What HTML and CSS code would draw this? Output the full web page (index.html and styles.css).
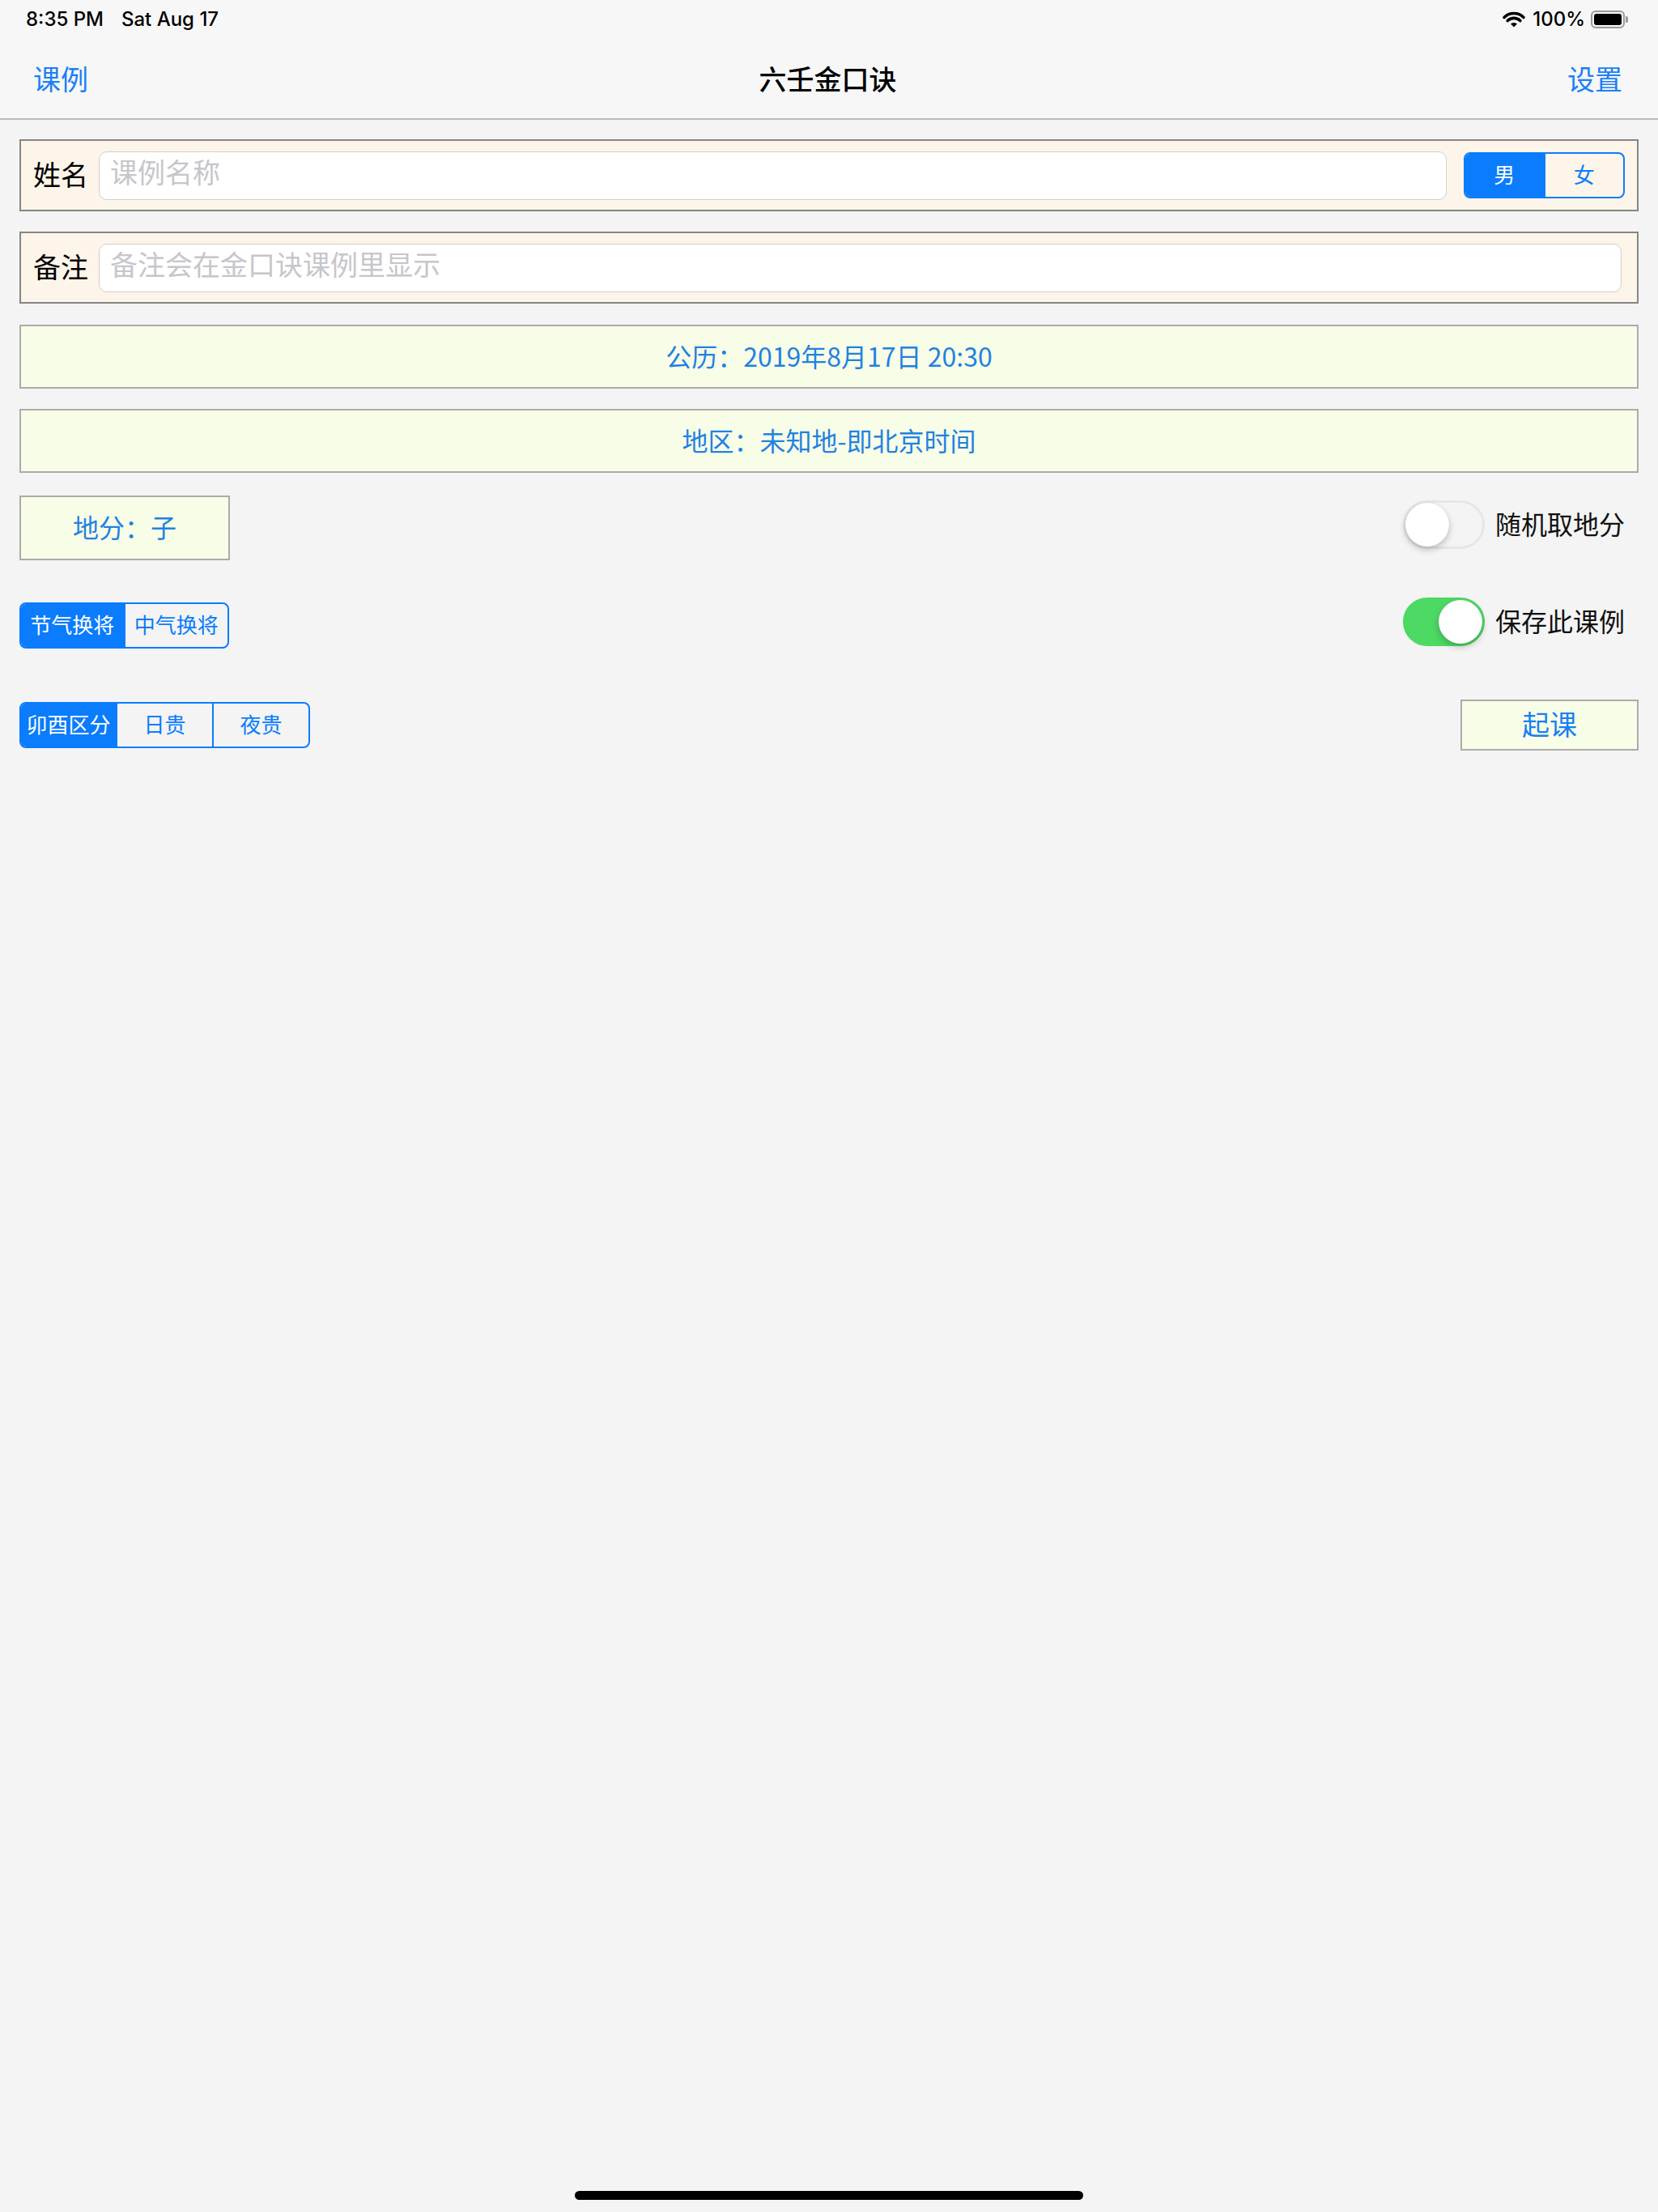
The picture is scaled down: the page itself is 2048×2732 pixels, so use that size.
FILE: index.html
```html
<!DOCTYPE html>
<html>
	<head>
		<meta charset="UTF-8">
		<title>六壬金口诀</title>
		<link rel="stylesheet" href="styles.css">
	</head>
	<body>
		<div class="page">
			<div class="topbar">
				<div class="statusbar">
					<div class="sb-left">
						<span>8:35 PM</span>
						<span>Sat Aug 17</span>
					</div>
					<div class="sb-right">
						<svg class="wifi" width="30" height="22" viewBox="0 0 30 22">
							<path d="M3 8.5 A17 17 0 0 1 27 8.5" fill="none" stroke="#000" stroke-width="3.6" stroke-linecap="round"/>
							<path d="M7.2 12.6 A11 11 0 0 1 22.8 12.6" fill="none" stroke="#000" stroke-width="3.6" stroke-linecap="round"/>
							<path d="M15 20.5 L11 16.6 A5.6 5.6 0 0 1 19 16.6 Z" fill="#000"/>
						</svg>
						<span>100%</span>
						<span class="battery"><span class="battery-level"></span></span>
						<span class="battery-nub"></span>
					</div>
				</div>
				<div class="navbar">
					<a class="nav-btn" href="javascript:;">课例</a>
					<div class="nav-title">六壬金口诀</div>
					<a class="nav-btn nav-right" href="javascript:;">设置</a>
				</div>
			</div>

			<div class="form">
				<div class="field-row">
					<span class="field-label">姓名</span>
					<div class="field-input">课例名称</div>
					<div class="seg seg-gender">
						<span class="seg-item on">男</span>
						<span class="seg-item">女</span>
					</div>
				</div>
				<div class="field-row field-row-wide">
					<span class="field-label">备注</span>
					<div class="field-input">备注会在金口诀课例里显示</div>
				</div>
				<div class="info-box">公历：2019年8月17日 20:30</div>
				<div class="info-box">地区：未知地-即北京时间</div>

				<div class="option-row row-difen">
					<div class="pick-box">地分：子</div>
					<div class="switch-group">
						<span class="switch"><span class="knob"></span></span>
						<span class="switch-label">随机取地分</span>
					</div>
				</div>

				<div class="option-row row-jiang">
					<div class="seg seg-jiang">
						<span class="seg-item on">节气换将</span>
						<span class="seg-item">中气换将</span>
					</div>
					<div class="switch-group">
						<span class="switch on"><span class="knob"></span></span>
						<span class="switch-label">保存此课例</span>
					</div>
				</div>

				<div class="option-row row-gui">
					<div class="seg seg-gui">
						<span class="seg-item on">卯酉区分</span>
						<span class="seg-item">日贵</span>
						<span class="seg-item">夜贵</span>
					</div>
					<a class="start-btn" href="javascript:;">起课</a>
				</div>
			</div>

			<div class="home-bar"></div>
		</div>
	</body>
</html>
```

FILE: styles.css
```css
* {
	margin: 0;
	padding: 0;
	box-sizing: border-box;
}
html, body {
	background: #f4f4f4;
}
body {
	font-family: "Noto Sans CJK SC", "Noto Sans", sans-serif;
	color: #000;
}
a {
	text-decoration: none;
}
.page {
	position: relative;
	min-height: 100vh;
}

/* top: status bar + navigation */
.topbar {
	background: #f7f7f7;
	border-bottom: 2px solid #bcbcbc;
}
.statusbar {
	height: 47px;
	padding: 0 37px 0 32px;
	display: flex;
	justify-content: space-between;
	align-items: center;
	font-family: Inter, "Noto Sans", sans-serif;
	font-size: 24px;
	font-weight: 500;
	line-height: 1;
}
.sb-left {
	display: flex;
	gap: 22px;
}
.sb-right {
	display: flex;
	align-items: center;
}
.wifi {
	margin-right: 8px;
}
.battery {
	width: 42px;
	height: 22px;
	margin-left: 7px;
	border: 2px solid #9a9a9a;
	border-radius: 6px;
	padding: 2px;
	display: flex;
}
.battery-level {
	flex: 1;
	background: #000;
	border-radius: 3px;
}
.battery-nub {
	width: 3px;
	height: 8px;
	background: #9a9a9a;
	border-radius: 0 2px 2px 0;
	margin-left: 1px;
}
.navbar {
	height: 99px;
	padding: 0 44px 0 41px;
	display: grid;
	grid-template-columns: 1fr auto 1fr;
	align-items: center;
}
.nav-btn {
	font-size: 34px;
	line-height: 1;
	color: #1a7ff8;
}
.nav-right {
	justify-self: end;
}
.nav-title {
	font-size: 34px;
	font-weight: 500;
	line-height: 1;
}

/* form */
.form {
	padding: 24px 24px 0;
	display: flex;
	flex-direction: column;
}
.field-row {
	height: 89px;
	border: 2px solid #858585;
	background: #fdf5e9;
	display: flex;
	align-items: center;
	padding: 0 15px;
	margin-bottom: 25px;
}
.field-row-wide {
	padding-right: 19px;
	margin-bottom: 26px;
}
.field-label {
	font-size: 34px;
	line-height: 1;
	width: 68px;
	margin-right: 13px;
	padding-bottom: 4px;
}
.field-input {
	flex: 1;
	height: 60px;
	background: #fff;
	border: 1px solid #d3cec7;
	border-radius: 10px;
	padding: 0 0 10px 13px;
	display: flex;
	align-items: center;
	font-size: 34px;
	line-height: 1;
	color: #c6c6cb;
}
.info-box {
	height: 79px;
	border: 2px solid #ababab;
	background: #f8fde7;
	display: flex;
	align-items: center;
	justify-content: center;
	font-size: 32px;
	line-height: 1;
	padding-bottom: 4px;
	color: #1f82e2;
	margin-bottom: 25px;
}

/* segmented controls */
.seg {
	display: flex;
	height: 57px;
	border: 2px solid #0a7cfd;
	border-radius: 8px;
	overflow: hidden;
}
.seg-item {
	flex: 1;
	display: flex;
	align-items: center;
	justify-content: center;
	font-size: 26px;
	line-height: 1;
	padding-bottom: 3px;
	color: #0a7cfd;
	border-left: 2px solid #0a7cfd;
}
.seg-item:first-child {
	border-left: none;
}
.seg-item.on {
	background: #0a7cfd;
	color: #fff;
}
.seg-gender {
	width: 199px;
	margin-left: 21px;
}
.seg-jiang {
	width: 259px;
}
.seg-gui {
	width: 359px;
}

/* option rows */
.option-row {
	display: flex;
	justify-content: space-between;
	align-items: center;
}
.row-difen {
	margin-top: 3px;
	height: 80px;
}
.row-jiang {
	margin-top: 45px;
	height: 64px;
	align-items: flex-start;
}
.row-jiang .seg {
	margin-top: 7px;
}
.row-jiang .switch-group {
	margin-top: 1px;
}
.row-gui {
	margin-top: 63px;
	height: 63px;
}
.pick-box {
	width: 260px;
	height: 80px;
	border: 2px solid #ababab;
	background: #f8fde7;
	display: flex;
	align-items: center;
	justify-content: center;
	font-size: 32px;
	line-height: 1;
	padding-bottom: 4px;
	color: #1f82e2;
}
.switch-group {
	display: flex;
	align-items: center;
	gap: 13px;
	padding-right: 17px;
}
.row-difen .switch-group {
	margin-top: -9px;
}
.switch {
	position: relative;
	width: 101px;
	height: 60px;
	border-radius: 30px;
	background: #f4f4f4;
	border: 3px solid #e6e6e6;
}
.switch .knob {
	position: absolute;
	top: 0;
	left: 0;
	width: 54px;
	height: 54px;
	border-radius: 50%;
	background: #fff;
	box-shadow: 0 4px 8px rgba(0,0,0,0.22), 0 0 1px rgba(0,0,0,0.15);
}
.switch.on {
	background: #4cd964;
	border-color: #4cd964;
}
.switch.on .knob {
	left: auto;
	right: 0;
}
.switch-label {
	font-size: 32px;
	line-height: 1;
	padding-bottom: 4px;
	color: #111;
}
.start-btn {
	width: 220px;
	height: 63px;
	border: 2px solid #ababab;
	background: #f8fde7;
	display: flex;
	align-items: center;
	justify-content: center;
	font-size: 34px;
	line-height: 1;
	padding-bottom: 4px;
	color: #1680f5;
}

.home-bar {
	position: absolute;
	left: 50%;
	bottom: 15px;
	width: 628px;
	height: 11px;
	margin-left: -314px;
	border-radius: 6px;
	background: #000;
}
```
